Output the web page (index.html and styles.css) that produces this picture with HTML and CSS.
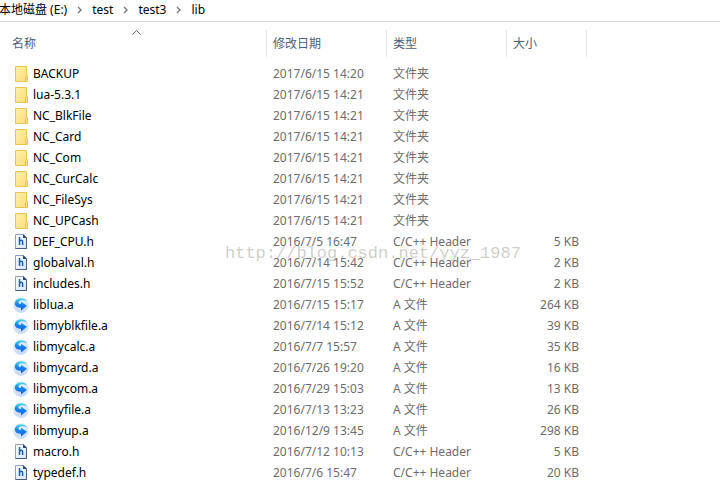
FILE: index.html
```
<!DOCTYPE html>
<html lang="zh-CN">
<head>
    <meta charset="UTF-8">
    <meta name="viewport" content="width=device-width, initial-scale=1.0">
    <title>lib</title>
    <link rel="stylesheet" href="styles.css">
</head>
<body>
    <svg class="sprite" aria-hidden="true">
        <defs>
            <linearGradient id="folder-fill" x1="0" y1="0" x2="1" y2="1">
                <stop offset="0" stop-color="#fff0a8"/>
                <stop offset="1" stop-color="#fddc78"/>
            </linearGradient>
            <linearGradient id="page-fill" x1="0" y1="0" x2="1" y2="1">
                <stop offset="0" stop-color="#ffffff"/>
                <stop offset="1" stop-color="#d3e3fa"/>
            </linearGradient>
            <linearGradient id="disc-fill" x1="0" y1="0" x2="0" y2="1">
                <stop offset="0" stop-color="#e9f3fc"/>
                <stop offset="1" stop-color="#c6d8f6"/>
            </linearGradient>
            <linearGradient id="arrow-fill" x1="0" y1="0" x2="0" y2="1">
                <stop offset="0" stop-color="#4fdce0"/>
                <stop offset="0.4" stop-color="#1c8cee"/>
                <stop offset="1" stop-color="#0a5cf0"/>
            </linearGradient>
            <symbol id="folder" viewBox="0 0 16 16">
                <path d="M2.5 .5h11v9h1v6h-12z" fill="url(#folder-fill)" stroke="#e8c455"/>
                <path d="M12.5 15.5v-5l1-1" fill="none" stroke="#e8c455"/>
            </symbol>
            <symbol id="header" viewBox="0 0 16 16">
                <path d="M2.5 .5h8l3 3v11h-11z" fill="url(#page-fill)" stroke="#8fa0ba"/>
                <path d="M13.5 4v10.5h-11" fill="none" stroke="#4a5d80"/>
                <path d="M10 0l4 4h-4z" fill="#33496e"/>
                <path d="M6.5 3v8M6.5 7.6q.4-1.3 1.6-1.3 1.5 0 1.5 1.6V11" fill="none" stroke="#1b5fae" stroke-width="1.5"/>
            </symbol>
            <symbol id="archive" viewBox="0 0 16 16">
                <circle cx="8" cy="8" r="7.9" fill="url(#disc-fill)"/>
                <path d="M14 4.5C11.500 .3 4.500 .2 2.300 4.500 .6 8 3.500 11 8 10.700V13.500L14 8.800 8 4.800V7C5.500 7 4.800 5.800 5.800 4.600 7.500 2.700 11.500 2.700 14 4.500z" fill="url(#arrow-fill)"/>
            </symbol>
            <symbol id="chevron" viewBox="0 0 5 8">
                <path d="M1 1l3 3-3 3" fill="none" stroke="#777" stroke-width="1.4"/>
            </symbol>
        </defs>
    </svg>

    <nav>
        <a href="#">本地磁盘 (E:)</a>
        <svg class="chevron"><use href="#chevron"/></svg>
        <a href="#">test</a>
        <svg class="chevron"><use href="#chevron"/></svg>
        <a href="#">test3</a>
        <svg class="chevron"><use href="#chevron"/></svg>
        <a href="#">lib</a>
    </nav>

    <main>
        <table>
            <colgroup>
                <col class="col-name">
                <col class="col-date">
                <col class="col-type">
                <col class="col-size">
                <col>
            </colgroup>
            <thead>
                <tr>
                    <th class="name" aria-sort="ascending">
                        <button type="button">名称</button>
                        <svg class="sort" viewBox="0 0 9 5"><path d="M.5 4.5l4-4 4 4" fill="none" stroke="#6d6d6d"/></svg>
                    </th>
                    <th><button type="button">修改日期</button></th>
                    <th><button type="button">类型</button></th>
                    <th><button type="button">大小</button></th>
                    <th></th>
                </tr>
            </thead>
            <tbody id="files"></tbody>
        </table>
        <div class="watermark">http://blog.csdn.net/yyz_1987</div>
    </main>

    <script src="files.js"></script>
</body>
</html>
```
FILE: styles.css
```
* {
    box-sizing: border-box;
    margin: 0;
    padding: 0;
}

body {
    background: #fff;
    color: #000;
    font-family: "Noto Sans", "Noto Sans CJK SC", sans-serif;
    font-size: 12px;
    line-height: 20px;
}

.sprite {
    position: absolute;
    width: 0;
    height: 0;
}

/* breadcrumb */
nav {
    display: flex;
    align-items: center;
    gap: 10px;
    height: 22px;
    margin-left: -1px;
    padding-bottom: 2px;
    border-bottom: 1px solid #d9d9d9;
    white-space: nowrap;
}

nav a {
    color: #000;
    text-decoration: none;
}

.chevron {
    width: 5px;
    height: 8px;
}

main {
    position: relative;
}

/* file list */
table {
    width: 100%;
    table-layout: fixed;
    border-collapse: collapse;
}

.col-name {
    width: 266px;
}

.col-date,
.col-type {
    width: 120px;
}

.col-size {
    width: 80px;
}

th {
    height: 41px;
    padding-top: 2px;
    text-align: left;
    font-weight: normal;
    background: linear-gradient(#e5e5e5, #e5e5e5) 0 8px / 1px 27px no-repeat;
}

th.name {
    position: relative;
    background: none;
}

th button {
    display: block;
    width: 100%;
    padding-left: 7px;
    border: 0;
    background: none;
    color: #4c607a;
    font: inherit;
    text-align: left;
}

th.name button {
    padding-left: 12px;
}

.sort {
    position: absolute;
    top: 8px;
    left: 132px;
    width: 9px;
    height: 5px;
}

td {
    height: 21px;
    padding-left: 7px;
    color: #6d6d6d;
    white-space: nowrap;
}

td.name {
    padding-left: 13px;
    color: #000;
}

td.name div {
    display: flex;
    align-items: center;
    gap: 4px;
}

td.name svg {
    width: 16px;
    height: 16px;
}

td.size {
    padding: 0 7px 0 0;
    text-align: right;
}

.watermark {
    position: absolute;
    top: 222px;
    left: 225px;
    color: rgba(160, 160, 150, 0.5);
    font-family: "Liberation Mono", monospace;
    font-size: 17px;
    pointer-events: none;
}
```
FILE: files.js
```
const files = [
    ["folder", "BACKUP", "2017/6/15 14:20", ""],
    ["folder", "lua-5.3.1", "2017/6/15 14:21", ""],
    ["folder", "NC_BlkFile", "2017/6/15 14:21", ""],
    ["folder", "NC_Card", "2017/6/15 14:21", ""],
    ["folder", "NC_Com", "2017/6/15 14:21", ""],
    ["folder", "NC_CurCalc", "2017/6/15 14:21", ""],
    ["folder", "NC_FileSys", "2017/6/15 14:21", ""],
    ["folder", "NC_UPCash", "2017/6/15 14:21", ""],
    ["header", "DEF_CPU.h", "2016/7/5 16:47", "5 KB"],
    ["header", "globalval.h", "2016/7/14 15:42", "2 KB"],
    ["header", "includes.h", "2016/7/15 15:52", "2 KB"],
    ["archive", "liblua.a", "2016/7/15 15:17", "264 KB"],
    ["archive", "libmyblkfile.a", "2016/7/14 15:12", "39 KB"],
    ["archive", "libmycalc.a", "2016/7/7 15:57", "35 KB"],
    ["archive", "libmycard.a", "2016/7/26 19:20", "16 KB"],
    ["archive", "libmycom.a", "2016/7/29 15:03", "13 KB"],
    ["archive", "libmyfile.a", "2016/7/13 13:23", "26 KB"],
    ["archive", "libmyup.a", "2016/12/9 13:45", "298 KB"],
    ["header", "macro.h", "2016/7/12 10:13", "5 KB"],
    ["header", "typedef.h", "2016/7/6 15:47", "20 KB"]
];

const types = {
    folder: "文件夹",
    header: "C/C++ Header",
    archive: "A 文件"
};

document.getElementById("files").innerHTML = files.map(([kind, name, date, size]) => `
    <tr>
        <td class="name"><div><svg><use href="#${kind}"/></svg><span>${name}</span></div></td>
        <td>${date}</td>
        <td>${types[kind]}</td>
        <td class="size">${size}</td>
        <td></td>
    </tr>`).join("");
```
